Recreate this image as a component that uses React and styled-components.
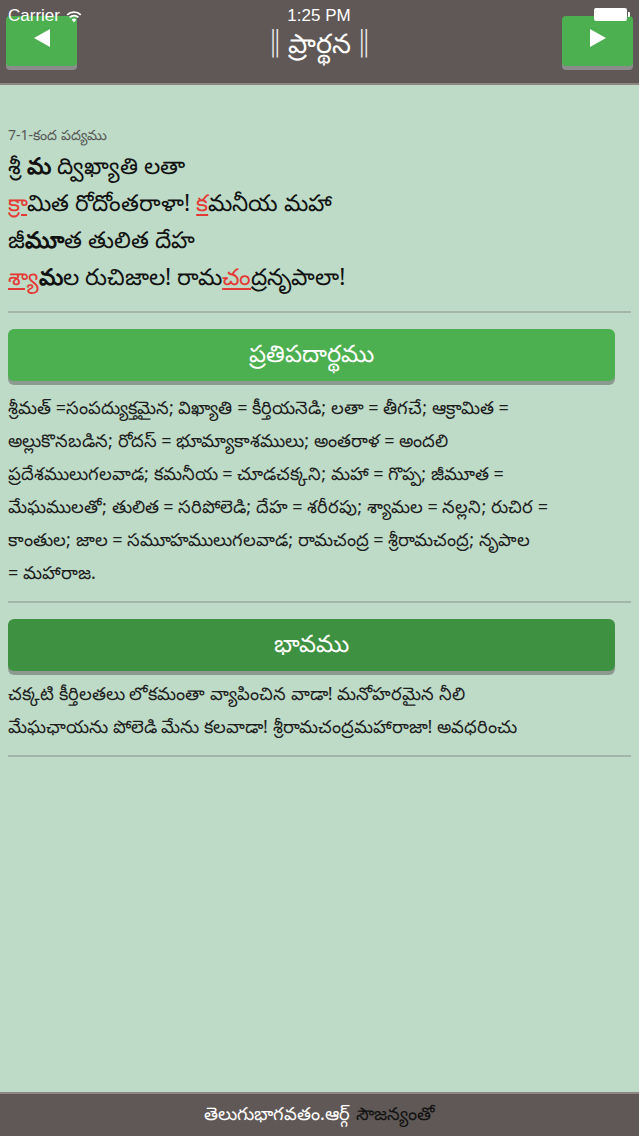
import styled, { createGlobalStyle } from 'styled-components';

const GlobalStyle = createGlobalStyle`
	html, body {
		margin: 0;
		padding: 0;
		background: #bddbc7;
		font-family: 'Noto Sans', 'DejaVu Sans', sans-serif;
	}
`;

const verse = [
	[{ t: 'శ్రీ ' }, { t: 'మ', b: true }, { t: ' ద్విఖ్యాతి లతా' }],
	[{ t: 'క్రా', r: true }, { t: 'మిత రోదోంతరాళా! ' }, { t: 'క', r: true }, { t: 'మనీయ మహా' }],
	[{ t: 'జీ' }, { t: 'మూ', b: true }, { t: 'త తులిత దేహ' }],
	[{ t: 'శ్యా', r: true }, { t: 'మ', b: true }, { t: 'ల రుచిజాల! రామ' }, { t: 'చం', r: true }, { t: 'ద్రనృపాలా!' }],
];

// lines broken where the app breaks them
const meaning = [
	'శ్రీమత్ =సంపద్యుక్తమైన; విఖ్యాతి = కీర్తియనెడి; లతా = తీగచే; ఆక్రామిత =',
	'అల్లుకొనబడిన; రోదస్ = భూమ్యాకాశములు; అంతరాళ = అందలి',
	'ప్రదేశములుగలవాడ; కమనీయ = చూడచక్కని; మహా = గొప్ప; జీమూత =',
	'మేఘములతో; తులిత = సరిపోలెడి; దేహ = శరీరపు; శ్యామల = నల్లని; రుచిర =',
	'కాంతుల; జాల = సమూహములుగలవాడ; రామచంద్ర = శ్రీరామచంద్ర; నృపాల',
	'= మహారాజ.',
];

const bhavam = [
	'చక్కటి కీర్తిలతలు లోకమంతా వ్యాపించిన వాడా! మనోహరమైన నీలి',
	'మేఘఛాయను పోలెడి మేను కలవాడా! శ్రీరామచంద్రమహారాజా! అవధరించు',
];

const WifiIcon = () => (
	<svg width="16" height="13" viewBox="0 0 16 13">
		<path d="M8 12.5 L5.6 9.6 A3.6 3.6 0 0 1 10.4 9.6 Z" fill="#fff" />
		<path d="M3.6 7.4 A6.4 6.4 0 0 1 12.4 7.4" stroke="#fff" strokeWidth="1.8" fill="none" />
		<path d="M1.2 4.8 A9.8 9.8 0 0 1 14.8 4.8" stroke="#fff" strokeWidth="1.8" fill="none" />
	</svg>
);

const Lines = ({ lines }) =>
	lines.map((l, i) => (
		<span key={i}>
			{l}
			{i < lines.length - 1 && <br />}
		</span>
	));

const App = () => {
	return (
		<Page>
			<GlobalStyle />
			<Header>
				<StatusBar>
					<Carrier>
						Carrier <WifiIcon />
					</Carrier>
					<Time>1:25 PM</Time>
					<Battery>
						<BatteryBody />
						<BatteryTip />
					</Battery>
				</StatusBar>
				<NavButton aria-label="previous">
					<Arrow $dir="left" />
				</NavButton>
				<Title>
					<Bars>||</Bars> ప్రార్థన <Bars>||</Bars>
				</Title>
				<NavButton aria-label="next">
					<Arrow $dir="right" />
				</NavButton>
			</Header>

			<Content>
				<Section>
					<VerseLabel>7-1-కంద పద్యము</VerseLabel>
					<Verse>
						{verse.map((line, i) => (
							<div key={i}>
								{line.map((part, j) =>
									part.r ? (
										<Mark key={j}>{part.t}</Mark>
									) : part.b ? (
										<Strong key={j}>{part.t}</Strong>
									) : (
										<span key={j}>{part.t}</span>
									)
								)}
							</div>
						))}
					</Verse>
				</Section>
				<Divider />

				<Section>
					<SectionButton $shade="#4caf50" $gap={10}>
						ప్రతిపదార్థము
					</SectionButton>
					<Paragraph>
						<Lines lines={meaning} />
					</Paragraph>
				</Section>
				<Divider />

				<Section>
					<SectionButton $shade="#3f9142" $gap={6}>
						భావము
					</SectionButton>
					<Paragraph>
						<Lines lines={bhavam} />
					</Paragraph>
				</Section>
				<Divider />
			</Content>

			<Footer>
				తెలుగుభాగవతం.ఆర్గ్ <Dark>సౌజన్యంతో</Dark>
			</Footer>
		</Page>
	);
};

export default App;

const Page = styled.div`
	width: 639px;
	height: 1136px;
	display: flex;
	flex-direction: column;
	background: #bddbc7;
	overflow: hidden;
`;

const Header = styled.header`
	position: relative;
	height: 85px;
	flex-shrink: 0;
	background: #5f5856;
	border-bottom: 2px solid #8d8784;
	display: flex;
	align-items: flex-start;
	justify-content: space-between;
	padding: 16px 6px 0;
	box-sizing: border-box;
`;

const StatusBar = styled.div`
	position: absolute;
	top: 0;
	left: 0;
	right: 0;
	height: 30px;
	display: flex;
	align-items: center;
	justify-content: space-between;
	padding: 0 9px 0 8px;
	color: #fff;
	font-family: 'Liberation Sans', Arial, sans-serif;
	z-index: 2;
	pointer-events: none;
`;

const Carrier = styled.div`
	display: flex;
	align-items: center;
	gap: 6px;
	font-size: 17px;
	margin-top: 2px;
	width: 120px;
`;

const Time = styled.div`
	font-size: 17px;
	margin-top: 2px;
`;

const Battery = styled.div`
	width: 120px;
	display: flex;
	justify-content: flex-end;
	align-items: center;
	margin-top: -2px;
`;

const BatteryBody = styled.div`
	width: 33px;
	height: 13px;
	background: #fff;
	border-radius: 2px;
`;

const BatteryTip = styled.div`
	width: 2px;
	height: 5px;
	background: #fff;
	margin-left: 1px;
	border-radius: 0 1px 1px 0;
`;

const NavButton = styled.button`
	width: 71px;
	height: 50px;
	border: none;
	border-radius: 4px;
	background: #4caf50;
	box-shadow: 0 4px 0 #8c8c8c;
	display: flex;
	align-items: center;
	justify-content: center;
	padding: 0 0 6px;
	cursor: pointer;
`;

const Arrow = styled.span`
	width: 0;
	height: 0;
	border-top: 9px solid transparent;
	border-bottom: 9px solid transparent;
	${(p) =>
		p.$dir === 'left'
			? 'border-right: 16px solid #fff;'
			: 'border-left: 16px solid #fff;'}
`;

const Title = styled.h1`
	margin: 10px 0 0;
	color: #fff;
	font-size: 27px;
	font-weight: 400;
	line-height: 34px;
	display: flex;
	align-items: center;
	gap: 6px;
`;

const Bars = styled.span`
	font-family: 'DejaVu Sans', sans-serif;
	font-weight: 200;
	font-size: 28px;
	letter-spacing: -5px;
	margin-right: 5px;
	margin-top: -2px;
	opacity: 0.9;
`;

const Content = styled.main`
	flex: 1;
	padding: 40px 8px 0;
	display: flex;
	flex-direction: column;
`;

const Section = styled.section`
	display: flex;
	flex-direction: column;
`;

const VerseLabel = styled.div`
	font-size: 14px;
	color: #555;
	line-height: 20px;
	margin-bottom: 2px;
`;

const Verse = styled.div`
	font-size: 23px;
	line-height: 37px;
	color: #111;
	margin-bottom: 16px;
`;

const Mark = styled.span`
	color: #e53935;
	text-decoration: underline;
	text-underline-offset: 3px;
`;

const Strong = styled.span`
	font-weight: 700;
`;

const Divider = styled.hr`
	width: 100%;
	margin: 0 0 16px;
	border: none;
	border-top: 2px solid #a3b4a9;
`;

const SectionButton = styled.div`
	height: 52px;
	margin-right: 16px;
	border-radius: 6px;
	background: ${(p) => p.$shade};
	box-shadow: 0 4px 0 #8c9a90;
	color: #fff;
	font-size: 24px;
	display: flex;
	align-items: center;
	justify-content: center;
	margin-bottom: ${(p) => p.$gap}px;
`;

const Paragraph = styled.p`
	margin: 0 0 12px;
	font-size: 18px;
	line-height: 33px;
	color: #1d1d1d;
`;

const Footer = styled.footer`
	height: 42px;
	flex-shrink: 0;
	background: #5f5856;
	border-top: 2px solid #8d8784;
	color: #fff;
	font-size: 18px;
	display: flex;
	align-items: center;
	justify-content: center;
	gap: 6px;
`;

const Dark = styled.span`
	color: #111;
`;
